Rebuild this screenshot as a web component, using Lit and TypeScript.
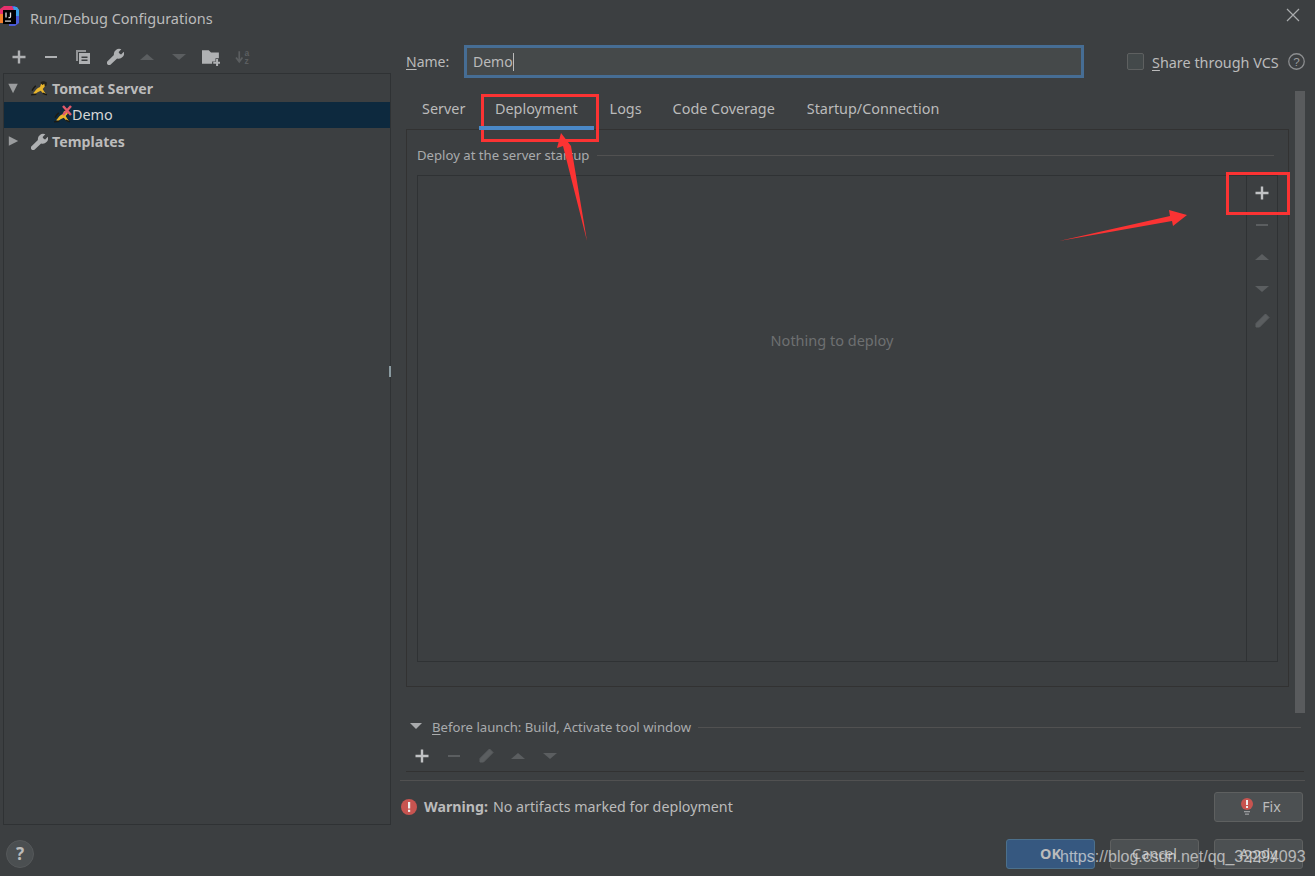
import { LitElement, html, css, svg } from "lit";
import { customElement } from "lit/decorators.js";

const plus = (c: string) => svg`<path d="M6.800 1.500h2.400v5.300h5.300v2.400H9.200v5.300H6.800V9.200H1.500V6.800h5.300z" fill=${c}/>`;
const minus = (c: string) => svg`<rect x="2" y="7" width="12" height="2" fill=${c}/>`;
const up = (c: string) => svg`<path d="M1 11 8 5l7 6z" fill=${c}/>`;
const down = (c: string) => svg`<path d="M1 5h14l-7 6z" fill=${c}/>`;
const pencil = (c: string) => svg`<path d="M11.500 1 15 4.500 5.500 14H2v-3.500z" fill=${c} stroke=${c} stroke-linejoin="round"/>`;
const wrench = (c: string) => svg`<path d="M13.500 1.200 11 3.700l.3 1 1 1 1 .3 2.500-2.500a5 5 0 0 1-6.300 6.300L3.500 15.500a2 2 0 0 1-3-3l6-6A5 5 0 0 1 13.500 1.200z" fill=${c}/>`;
const I = (c: unknown, size = 16) => html`<svg width=${size} height=${size} viewBox="0 0 16 16">${c}</svg>`;

const GRAY = "#afb1b3";
const DIM = "#5b5e60";

const cat = svg`<g>
  <path d="M9 2c2-1.500 4.500-1 6 .5l-.5 3-3.500 1.500z" fill="#23221c"/>
  <path d="M2 12.500C4 10 5.500 7.500 8.500 6.500l1-3 1.300 1.300 1.700-1.300.5 2.500-2 2.500 1.500 2.500 1.500 2-2 .3-2.800-3.300-3 1.500-2.200 1.700z" fill="#e8b52c"/>
  <path d="M1 10c1-2 2-3 3.500-4.500M0 14l5-.5M11 12.500l4 1.500" stroke="#1a1914" stroke-width="1.400" fill="none"/>
</g>`;

@customElement("app-root")
export class AppRoot extends LitElement {
  static styles = css`
    :host {
      display: block;
      position: relative;
      width: 1315px;
      height: 876px;
      overflow: hidden;
      background: #3c3f41;
      color: #bbbbbb;
      font-family: "Noto Sans", "Open Sans", sans-serif;
      font-size: 14.4px;
      line-height: 20px;
    }
    svg { display: block; flex: none; }
    u { text-underline-offset: 2px; }
    .titlebar { height: 40px; box-sizing: border-box; display: flex; align-items: flex-start; padding-top: 8px; font-size: 14.500px; }
    .logo { margin-right: 11px; margin-top: -2px; }
    .close { margin-left: auto; margin-right: 15px; }
    .main { display: grid; grid-template-columns: 391px 1fr; height: 785px; }
    .left { display: flex; flex-direction: column; }
    .tb { display: flex; height: 33px; padding-left: 3px; align-items: center; flex: none; }
    .tb > div { width: 32px; display: flex; justify-content: center; }
    .tree { flex: 1; margin-left: 3px; border: 1px solid #2f3234; padding-top: 1px; box-sizing: border-box; }
    .row { height: 27px; display: flex; align-items: center; position: relative; }
    .row.sel { height: 26px; background: #0d293e; color: #d6d6d6; }
    .row b { font-weight: 700; font-size: 14.200px; }
    .twist { width: 16px; margin-left: 1px; margin-right: 10px; display: flex; justify-content: center; }
    .ic { margin-right: 4px; }
    .row.child { padding-left: 50px; }
    .row.child .ic { margin-right: 1px; }
    .x { position: absolute; left: 58px; top: 3px; }
    .right { display: flex; flex-direction: column; padding-left: 15px; padding-right: 10px; }
    .namerow { display: flex; align-items: center; height: 33px; margin-top: 5px; }
    .namelabel { width: 44px; white-space: nowrap; font-size: 14px; }
    .input {
      width: 620px; height: 33px; box-sizing: border-box; margin-left: 14px;
      background: #45494a; border: 3px solid #466d94; padding-left: 6px; display: flex; align-items: center; font-size: 14px;
    }
    .caret { width: 1px; height: 18px; background: #bbb; }
    .check { width: 17px; height: 17px; margin-left: 43px; box-sizing: border-box; border: 1px solid #5e6060; border-radius: 2px; background: #43494a; margin-right: 8px; }
    .share { padding-top: 2px; }
    .help { margin-left: 9px; }
    .scrollarea { display: flex; gap: 6px; height: 622px; margin-top: 13px; }
    .col { width: 883px; display: flex; flex-direction: column; }
    .bar { width: 10px; background: #595b5d; }
    .tabs { display: flex; height: 38px; flex: none; }
    .tab { padding: 8px 16px 0; box-sizing: border-box; height: 39px; position: relative; z-index: 1; white-space: nowrap; }
    .tab.server { width: 73px; }
    .tab.logs { width: 63px; }
    .tab.on { border-bottom: 4px solid #4a88c7; }
    .panel { height: 558px; flex: none; border: 1px solid #323232; box-sizing: border-box; padding: 15px 10px 0; }
    .group { display: flex; align-items: center; height: 20px; font-size: 13.150px; color: #a9abad; gap: 8px; }
    .line { flex: 1; height: 1px; background: #515151; }
    .group .line { margin-right: 4px; }
    .box { margin-top: 10px; height: 487px; border: 1px solid #2f3234; box-sizing: border-box; display: flex; }
    .empty { flex: 1; display: flex; align-items: center; justify-content: center; color: #6e7071; font-size: 14.500px; padding-bottom: 158px; }
    .side { width: 31px; box-sizing: border-box; border-left: 1px solid #2f3234; padding-top: 1px; display: flex; flex-direction: column; align-items: center; }
    .side > div { height: 32px; display: flex; align-items: center; }
    .before { display: flex; align-items: center; height: 14px; margin-top: 7px; font-size: 13.150px; color: #a9abad; }
    .before > svg { margin-left: 2px; }
    .before .t { margin-left: 8px; margin-right: 7px; }
    .before .line { margin-right: 4px; }
    .btb { display: flex; height: 24px; margin-top: 10px; align-items: center; }
    .btb > div { width: 32px; display: flex; justify-content: center; }
    .rule1 { height: 1px; background: #323232; margin: 3px 1px 0 0; }
    .rule2 { height: 1px; background: #515151; margin: 8px 0 0 -6px; }
    .warn { display: flex; align-items: center; height: 30px; margin-top: 11px; margin-left: -5px; font-size: 14.250px; }
    .warn b { margin-left: 7px; margin-right: 5px; font-size: 14.200px; }
    .btn {
      width: 89px; height: 30px; box-sizing: border-box; border: 1px solid #5e6060; border-radius: 3px;
      background: #4c5052; display: flex; align-items: center; justify-content: center; gap: 8px;
    }
    .btn.ok { background: #365880; border-color: #4c708c; font-weight: 700; }
    .fix { margin-left: auto; margin-right: 2px; padding-left: 4px; }
    .footer { display: flex; align-items: flex-start; padding: 14px 12px 0 6px; gap: 15px; }
    .q { width: 28px; height: 28px; margin-top: 1px; margin-right: auto; box-sizing: border-box; border: 1px solid #55585a; border-radius: 50%; background: #4b4f51; display: flex; align-items: center; justify-content: center; font-weight: 700; font-size: 17px; }
    .overlay { position: absolute; inset: 0; pointer-events: none; }
    .mark { position: absolute; left: 1060px; top: 847px; font-family: "Liberation Sans", Arial, sans-serif; font-size: 16px; color: rgba(225, 225, 225, 0.72); white-space: nowrap; }
    .red { position: absolute; border: 3px solid #fb3333; box-sizing: border-box; }
    .r1 { left: 481px; top: 94px; width: 118px; height: 48px; }
    .r2 { left: 1226px; top: 172px; width: 64px; height: 43px; }
    .grip { position: absolute; left: 389px; top: 366px; width: 2px; height: 11px; background: #8a9aa0; }
  `;

  render() {
    return html`
      <div class="titlebar">
        <svg class="logo" width="19" height="20" viewBox="0 0 19 20">
          <path d="M9 0h6l4 4v13l-4 3H9z" fill="#4a5bd8"/>
          <path d="M13 1h4l2 3v6h-4z" fill="#3aa0e6"/>
          <path d="M0 3l4-3h8l2 4-6 4H0z" fill="#e5316e"/>
          <path d="M0 8h4v9H0z" fill="#f57f2a"/>
          <rect x="3" y="4" width="13" height="14" fill="#000"/>
          <rect x="5" y="14.500" width="6" height="1.200" fill="#ddd"/>
          <path d="M6 6.500v5M10.500 6.500v4q0 1.500-2 1" stroke="#ddd" stroke-width="1.300" fill="none"/>
        </svg>
        <span>Run/Debug Configurations</span>
        <svg class="close" width="14" height="14" viewBox="0 0 14 14"><path d="M1 1l12 12M13 1 1 13" stroke="#a9abad" stroke-width="1.200"/></svg>
      </div>
      <div class="main">
        <div class="left">
          <div class="tb">
            <div>${I(plus(GRAY))}</div><div>${I(minus(GRAY))}</div>
            <div>${I(svg`<path d="M1 1h10v2H3v9H1z" fill=${GRAY} opacity=".75"/><path d="M4 4h11v11H4z" fill=${GRAY}/><path d="M6.500 7.500h6v1.500h-6zM6.500 10.500h6V12h-6z" fill="#3c3f41"/>`)}</div>
            <div>${I(wrench(GRAY), 17)}</div>
            <div>${I(up(DIM))}</div><div>${I(down(DIM))}</div>
            <div>${I(svg`<path d="M0 2h6l2 2h7v5h-3v3H9v2H0z" fill=${GRAY}/><path d="M12.500 9.800h1.800v2.400h2.400V14h-2.400v2h-1.800v-2h-2.500v-1.800h2.500z" fill=${GRAY}/>`, 18)}</div>
            <div>${I(svg`<path d="M4 3v9M1 9l3 4 3-4" stroke=${DIM} stroke-width="1.600" fill="none"/><text x="9" y="7.500" font-size="8" font-family="Liberation Sans" font-weight="700" fill=${DIM}>a</text><text x="9" y="15.500" font-size="8" font-family="Liberation Sans" font-weight="700" fill=${DIM}>z</text>`, 17)}</div>
          </div>
          <div class="tree">
            <div class="row">
              <span class="twist">${I(svg`<path d="M2.500 3h10l-5 10z" fill="#9a9c9e"/>`, 15)}</span>
              <span class="ic">${I(cat, 17)}</span><b>Tomcat Server</b>
            </div>
            <div class="row sel child">
              <span class="ic">${I(cat, 17)}</span>
              <svg class="x" width="10" height="11" viewBox="0 0 10 11"><path d="M1 1l8 9M9 1 1 10" stroke="#e0596a" stroke-width="2.500"/></svg>
              Demo
            </div>
            <div class="row">
              <span class="twist">${I(svg`<path d="M3 2.500l10 5-10 5z" fill="#9a9c9e"/>`, 15)}</span>
              <span class="ic">${I(wrench(GRAY), 17)}</span><b>Templates</b>
            </div>
          </div>
        </div>
        <div class="right">
          <div class="namerow">
            <span class="namelabel"><u>N</u>ame:</span>
            <div class="input"><span>Demo</span><span class="caret"></span></div>
            <div class="check"></div>
            <span class="share"><u>S</u>hare through VCS</span>
            <svg class="help" width="17" height="17" viewBox="0 0 16 16"><circle cx="8" cy="8" r="7.300" fill="none" stroke="#8c8e90" stroke-width="1.200"/><text x="8" y="12" text-anchor="middle" font-size="11" font-family="Liberation Sans" fill="#9a9c9e">?</text></svg>
          </div>
          <div class="scrollarea">
            <div class="col">
              <div class="tabs">
                <div class="tab server">Server</div>
                <div class="tab on">Deployment</div>
                <div class="tab logs">Logs</div>
                <div class="tab">Code Coverage</div>
                <div class="tab">Startup/Connection</div>
              </div>
              <div class="panel">
                <div class="group"><span>Deploy at the server startup</span><span class="line"></span></div>
                <div class="box">
                  <div class="empty">Nothing to deploy</div>
                  <div class="side">
                    <div>${I(plus("#c0c2c4"))}</div><div>${I(minus(DIM))}</div><div>${I(up(DIM))}</div><div>${I(down(DIM))}</div><div>${I(pencil(DIM))}</div>
                  </div>
                </div>
              </div>
            </div>
            <div class="bar"></div>
          </div>
          <div class="before">
            ${I(svg`<path d="M2 4h12L8 10z" fill="#a9abad"/>`)}
            <span class="t"><u>B</u>efore launch: Build, Activate tool window</span><span class="line"></span>
          </div>
          <div class="btb">
            <div>${I(plus("#c0c2c4"))}</div><div>${I(minus(DIM))}</div><div>${I(pencil(DIM))}</div><div>${I(up(DIM))}</div><div>${I(down(DIM))}</div>
          </div>
          <div class="rule1"></div>
          <div class="rule2"></div>
          <div class="warn">
            ${I(svg`<circle cx="8" cy="8" r="8" fill="#c75450"/><rect x="7" y="3" width="2.200" height="6.500" fill="#eee"/><rect x="7" y="10.700" width="2.200" height="2.200" fill="#eee"/>`)}
            <b>Warning:</b> No artifacts marked for deployment
            <div class="btn fix">
              <svg width="14" height="18" viewBox="0 0 14 18"><circle cx="7" cy="6" r="6" fill="#c75450"/><rect x="6" y="2" width="2" height="5" fill="#eee"/><rect x="6" y="8" width="2" height="2" fill="#eee"/><rect x="4" y="13" width="6" height="1.300" fill="#9a9c9e"/><rect x="5" y="15.500" width="4" height="1.300" fill="#9a9c9e"/></svg>
              Fix
            </div>
          </div>
        </div>
      </div>
      <div class="footer">
        <div class="q">?</div>
        <div class="btn ok">OK</div>
        <div class="btn">Cancel</div>
        <div class="btn">Apply</div>
      </div>
      <div class="red r1"></div>
      <div class="red r2"></div>
      <div class="grip"></div>
      <svg class="overlay" width="1315" height="876" viewBox="0 0 1315 876">
        <path d="M587 241 571 146 561 133 557 148 563 146z" fill="#fb3333"/>
        <path d="M1059 241 1170 216 1169 210 1187 215 1173 226 1172 221z" fill="#fb3333"/>
      </svg>
      <div class="mark">https://blog.csdn.net/qq_32294093</div>
    `;
  }
}
